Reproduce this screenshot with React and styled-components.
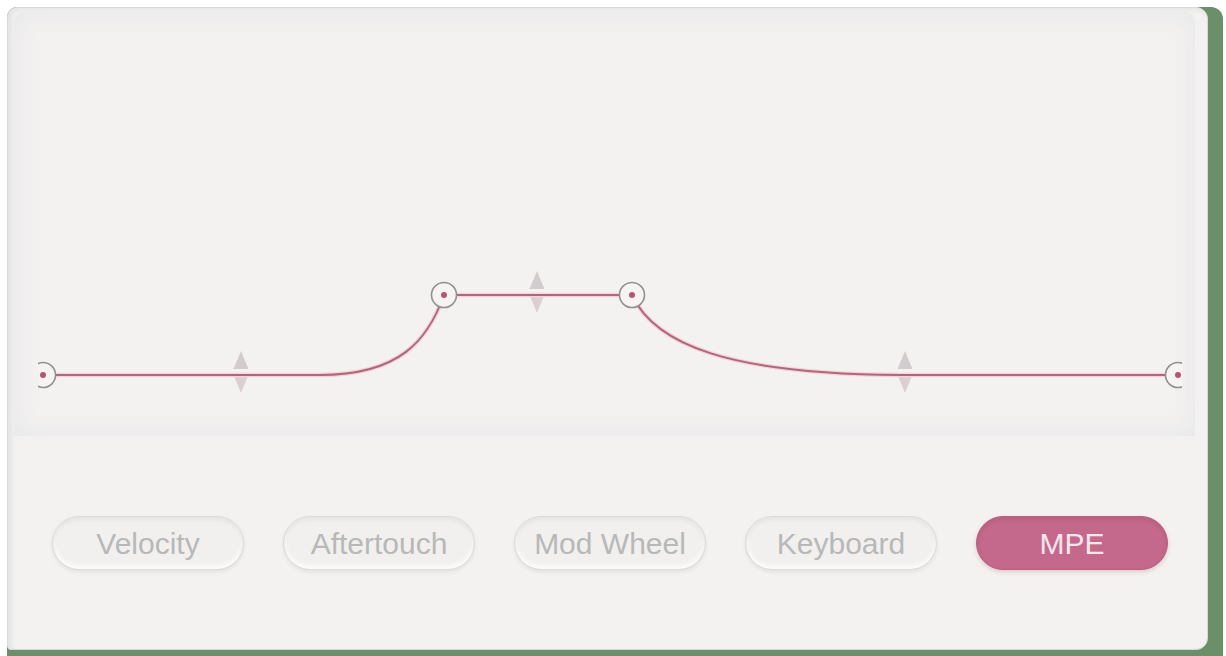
import React from "react";
import styled, { createGlobalStyle } from "styled-components";

const Global = createGlobalStyle`
  html, body { margin: 0; padding: 0; background: #ffffff; }
  body { font-family: "Liberation Sans", Arial, sans-serif; }
`;

const Frame = styled.div`
  margin: 7px 0 0 7px;
  width: 1201px;
  height: 643px;
  border-right: 15px solid #6b8f68;
  border-bottom: 6px solid #6b8f68;
  background: #6b8f68;
  border-radius: 10px 12px 0 0;
`;

const Panel = styled.div`
  box-sizing: border-box;
  width: 1201px;
  height: 643px;
  background: #f3f2f0;
  border: 1px solid #d9d9d9;
  border-radius: 10px 12px 12px 4px;
  box-shadow: inset 6px 0 5px -2px #e4e4e4, inset 0 5px 5px -2px #e8e8e8;
  display: flex;
  flex-direction: column;
  overflow: hidden;
`;

const GraphArea = styled.div`
  margin: 4px 12px 0 6px;
  height: 424px;
  background: #f4f2f0;
  border-radius: 10px 10px 0 0;
  box-shadow: inset 0 0 26px rgba(210, 216, 228, 0.45);
  overflow: hidden;
`;

const ButtonRow = styled.div`
  flex: 1;
  display: flex;
  align-items: center;
  gap: 39px;
  padding: 0 0 0 44px;
`;

const Pill = styled.button`
  box-sizing: border-box;
  width: 192px;
  height: 54px;
  border-radius: 27px;
  font-family: "Liberation Sans", Arial, sans-serif;
  font-size: 30px;
  line-height: 1;
  padding: 3px 0 0;
  cursor: pointer;
  color: ${(p) => (p.$active ? "#f8e6ee" : "#b8b8b8")};
  background: ${(p) => (p.$active ? "#c4698b" : "#f1f0ee")};
  border: 1.5px solid ${(p) => (p.$active ? "#b9607f" : "#dddbd9")};
  box-shadow: ${(p) =>
    p.$active
      ? "0 2px 4px rgba(150, 60, 90, 0.22), inset 0 2px 4px rgba(120, 40, 70, 0.18)"
      : "0 2px 4px rgba(0, 0, 0, 0.07), inset 0 3px 4px rgba(0, 0, 0, 0.05), inset 0 -3px 5px rgba(255, 255, 255, 0.9)"};
`;

const Node = ({ x, y }) => (
  <g>
    <circle cx={x} cy={y} r="12.5" fill="#f6f4f3" stroke="#939092" strokeWidth="1.6" />
    <circle cx={x} cy={y} r="3" fill="#b5566f" />
  </g>
);

const Handle = ({ x, y }) => (
  <g>
    <polygon points={`${x},${y - 21} ${x + 7.5},${y - 3} ${x - 7.5},${y - 3}`} fill="#d2cccf" />
    <polygon points={`${x},${y + 21} ${x + 7.5},${y + 3} ${x - 7.5},${y + 3}`} fill="#dccfd3" />
  </g>
);

const curve =
  "M 30 375 L 320 375 C 400 375 428 340 444 295 L 632 295 C 655 345 730 374 900 375 L 1190 375";

const Graph = () => (
  <svg width="1181" height="424" viewBox="14 12 1181 424" style={{ display: "block" }}>
    <defs>
      <clipPath id="gclip">
        <rect x="38" y="12" width="1144" height="424" />
      </clipPath>
    </defs>
    <g clipPath="url(#gclip)">
      <Handle x={241} y={372} />
      <Handle x={537} y={292} />
      <Handle x={905} y={372} />
      <path d={curve} fill="none" stroke="#f1d3db" strokeWidth="4.5" />
      <path d={curve} fill="none" stroke="#b2667a" strokeWidth="1.9" />
      <Node x={43} y={375} />
      <Node x={444} y={295} />
      <Node x={632} y={295} />
      <Node x={1178} y={375} />
    </g>
  </svg>
);

const sources = ["Velocity", "Aftertouch", "Mod Wheel", "Keyboard", "MPE"];

export default function App() {
  return (
    <>
      <Global />
      <Frame>
        <Panel>
          <GraphArea>
            <Graph />
          </GraphArea>
          <ButtonRow>
            {sources.map((s) => (
              <Pill key={s} $active={s === "MPE"}>
                {s}
              </Pill>
            ))}
          </ButtonRow>
        </Panel>
      </Frame>
    </>
  );
}
